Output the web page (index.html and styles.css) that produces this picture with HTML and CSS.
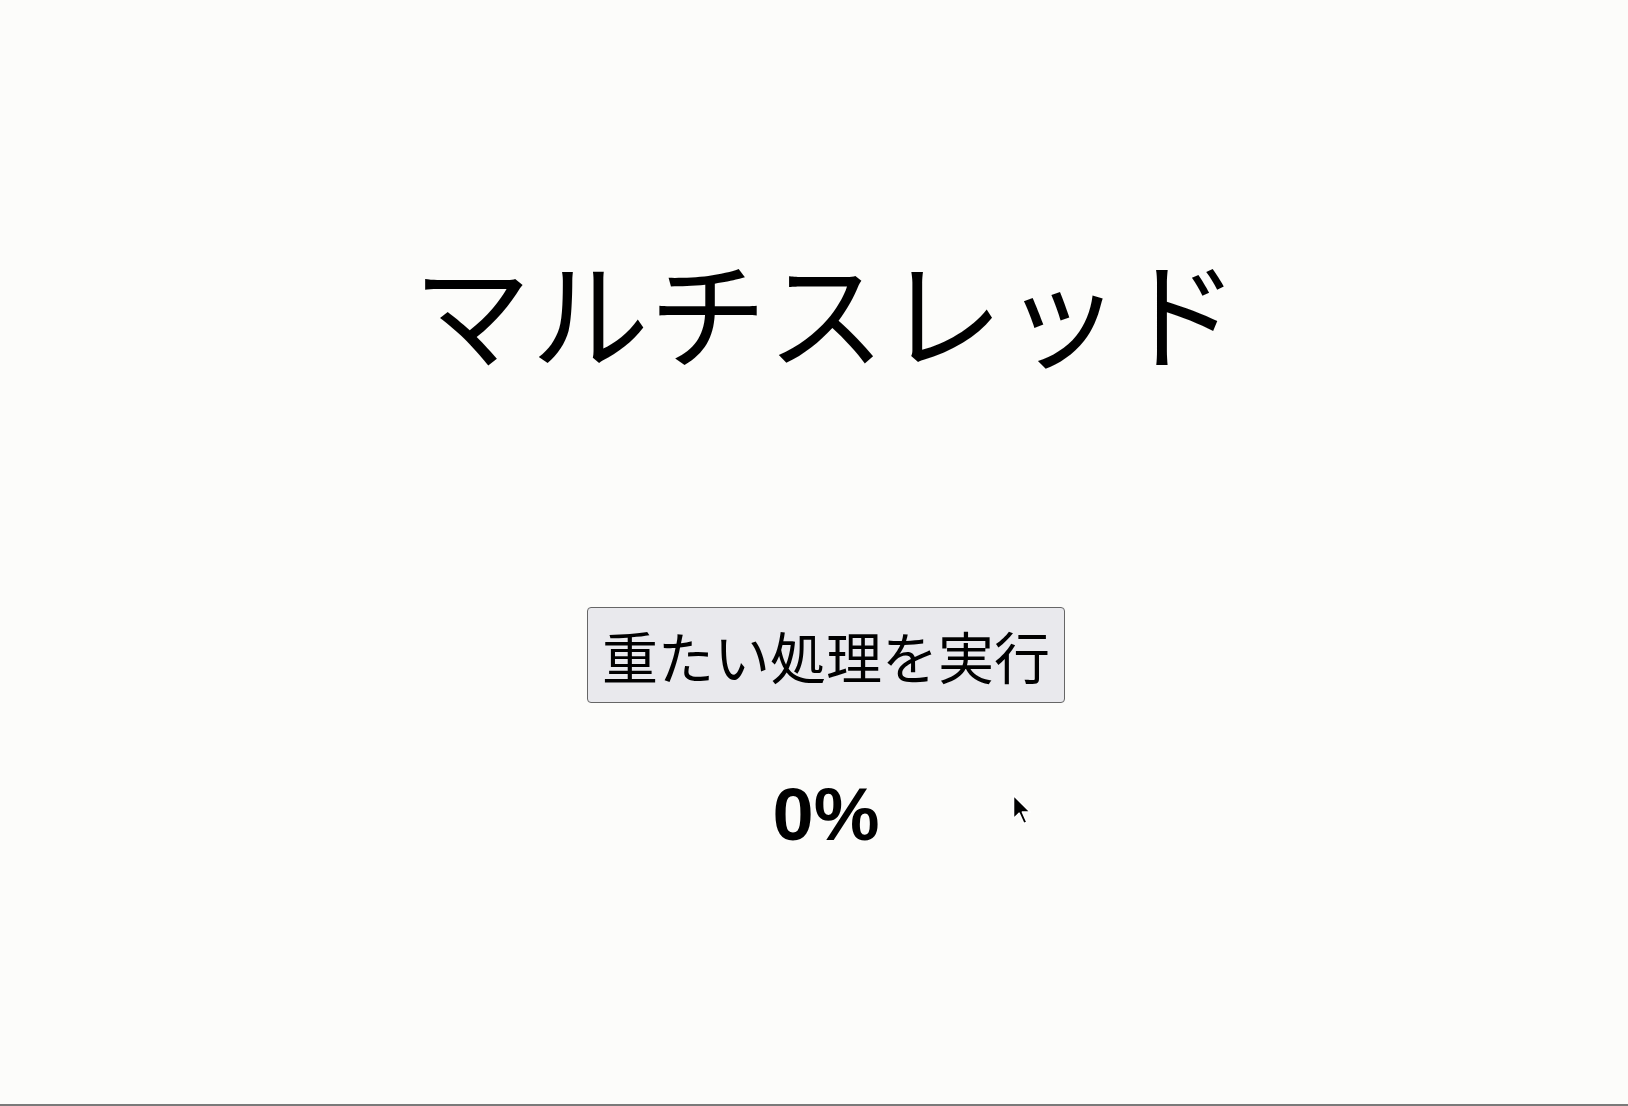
FILE: index.html
```html
<!DOCTYPE html>
<html lang="ja">
<head>
  <meta charset="UTF-8">
  <meta name="viewport" content="width=device-width, initial-scale=1.0">
  <title>マルチスレッド</title>
  <link rel="stylesheet" href="styles.css">
</head>
<body>
<div class="page">
  <h1>マルチスレッド</h1>

  <button id="runBtn">重たい処理を実行</button>

  <p id="progress" class="progress">0%</p>
</div>

<!-- マウスカーソル -->
<svg class="cursor" width="23" height="34" viewBox="0 0 20 30">
  <path d="M2 1 L2 22 L7 17 L11 26 L14 25 L10 16 L17 16 Z" fill="#000" stroke="#fff" stroke-width="1.5" stroke-linejoin="round"/>
</svg>
</body>
</html>
```

FILE: styles.css
```css
html, body {
  margin: 0;
  padding: 0;
}
body {
  background-color: #fcfcfa;
  font-family: "Noto Sans CJK JP", "Liberation Sans", sans-serif;
}
.page {
  height: 100vh;
  box-sizing: border-box;
  border-bottom: 2px solid #7a7a7a;
  display: flex;
  flex-direction: column;
  align-items: center;
  padding-left: 24px;
  padding-top: 238px;
}
h1 {
  margin: 0;
  font-size: 118px;
  font-weight: normal;
  line-height: 1.2;
  color: #000;
}
button {
  margin-top: 227px;
  font-family: "Noto Sans CJK JP", sans-serif;
  font-size: 56px;
  line-height: 1.4;
  padding: 8px 14px;
  background-color: #e9e9ed;
  border: 1px solid #666;
  border-radius: 4px;
  color: #000;
}
.progress {
  margin: 68px 0 0;
  font-family: "Liberation Sans", Arial, sans-serif;
  font-weight: bold;
  font-size: 74px;
  line-height: 1.2;
}
.cursor {
  position: absolute;
  left: 1011px;
  top: 794px;
}
```
